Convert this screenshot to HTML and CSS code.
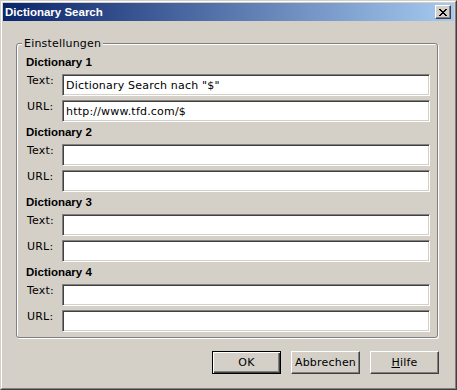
FILE: index.html
```html
<!DOCTYPE html>
<html lang="de">
<head>
  <meta charset="UTF-8">
  <meta name="viewport" content="width=device-width, initial-scale=1.0">
  <title>Dictionary Search</title>
  <link rel="stylesheet" href="styles.css">
</head>
<body>
  <div class="window">
    <div class="frame">
      <div class="titlebar">
        <span class="title">Dictionary Search</span>
        <button class="close" title="Schließen">
          <svg width="8" height="7" viewBox="0 0 8 7" shape-rendering="crispEdges">
            <path d="M0 0h2v1h-2zM6 0h2v1h-2zM1 1h2v1h-2zM5 1h2v1h-2zM2 2h4v1h-4zM3 3h2v1h-2zM2 4h4v1h-4zM1 5h2v1h-2zM5 5h2v1h-2zM0 6h2v1h-2zM6 6h2v1h-2z" fill="#000"/>
          </svg>
        </button>
      </div>

      <div class="content">
        <fieldset class="group">
          <legend>Einstellungen</legend>

          <div class="dict">
            <div class="dict-title">Dictionary 1</div>
            <div class="row"><label>Text:</label><input type="text" value="Dictionary Search nach &quot;$&quot;"></div>
            <div class="row"><label>URL:</label><input type="text" value="http://www.tfd.com/$"></div>
          </div>

          <div class="dict">
            <div class="dict-title">Dictionary 2</div>
            <div class="row"><label>Text:</label><input type="text"></div>
            <div class="row"><label>URL:</label><input type="text"></div>
          </div>

          <div class="dict">
            <div class="dict-title">Dictionary 3</div>
            <div class="row"><label>Text:</label><input type="text"></div>
            <div class="row"><label>URL:</label><input type="text"></div>
          </div>

          <div class="dict">
            <div class="dict-title">Dictionary 4</div>
            <div class="row"><label>Text:</label><input type="text"></div>
            <div class="row"><label>URL:</label><input type="text"></div>
          </div>
        </fieldset>

        <div class="buttons">
          <button class="btn btn-default">OK</button>
          <button class="btn">Abbrechen</button>
          <button class="btn"><u>H</u>ilfe</button>
        </div>
      </div>
    </div>
  </div>
</body>
</html>
```

FILE: styles.css
```css
body {
  margin: 0;
  font-family: "DejaVu Sans", Verdana, sans-serif;
  font-size: 11px;
  line-height: 13px;
  letter-spacing: 0.2px;
  color: #000;
  background-color: #d4d0c8;
}
.window {
  width: 457px;
  height: 390px;
  box-sizing: border-box;
  border: 1px solid;
  border-color: #d4d0c8 #404040 #404040 #d4d0c8;
}
.frame {
  height: 100%;
  box-sizing: border-box;
  border: 1px solid;
  border-color: #fff #808080 #808080 #fff;
  padding: 1px;
  background-color: #d4d0c8;
}
.titlebar {
  height: 18px;
  display: flex;
  align-items: center;
  justify-content: space-between;
  padding: 0 3px 0 2px;
  background: linear-gradient(to right, #0a246a, #a6caf0);
}
.title,
.dict-title {
  font-family: "Liberation Sans", Arial, sans-serif;
  font-size: 11.5px;
  font-weight: bold;
  letter-spacing: 0;
}
.title {
  color: #fff;
}
.close {
  width: 16px;
  height: 14px;
  padding: 0;
  display: flex;
  align-items: center;
  justify-content: center;
  background-color: #d4d0c8;
  border: 1px solid;
  border-color: #fff #404040 #404040 #fff;
  box-shadow: inset -1px -1px #808080;
}
.content {
  display: flex;
  flex-direction: column;
}
.group {
  margin: 16px 16px 13px 13px;
  padding: 6px 7px 5px 9px;
  border: 1px solid #808080;
  border-radius: 3px;
  box-shadow: inset 1px 1px #fff, 1px 1px #fff;
  min-inline-size: 0;
}
.group legend {
  margin-left: -4px;
  padding: 0 2px;
  background-color: #d4d0c8;
}
.dict {
  display: flex;
  flex-direction: column;
  gap: 4px;
}
.dict + .dict {
  margin-top: 4px;
}
.dict-title {
  margin-bottom: 1px;
}
.row {
  display: grid;
  grid-template-columns: 36px 1fr;
  align-items: start;
}
.row label {
  padding-left: 1px;
}
.row input {
  height: 22px;
  box-sizing: border-box;
  margin: 0;
  padding: 0 3px;
  font-family: inherit;
  font-size: 11px;
  letter-spacing: inherit;
  color: #000;
  background-color: #fff;
  border: 1px solid;
  border-color: #808080 #fff #fff #808080;
  box-shadow: inset 1px 1px #404040, inset -1px -1px #d4d0c8;
  outline: none;
}
.buttons {
  display: flex;
  justify-content: flex-end;
  gap: 10px;
  padding-right: 15px;
}
.btn {
  width: 69px;
  height: 23px;
  padding: 0;
  font-family: inherit;
  font-size: 11px;
  letter-spacing: inherit;
  color: #000;
  background-color: #d4d0c8;
  border: 1px solid;
  border-color: #fff #404040 #404040 #fff;
  box-shadow: inset -1px -1px #808080;
}
.btn-default {
  border-color: #000;
  box-shadow: inset 1px 1px #fff, inset -1px -1px #404040, inset -2px -2px #808080;
}
```
